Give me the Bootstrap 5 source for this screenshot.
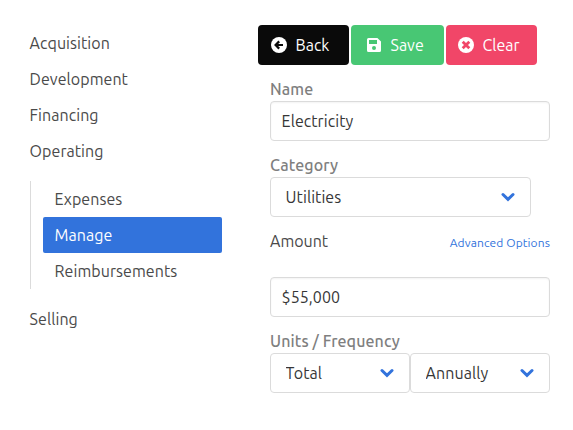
<!DOCTYPE html>
<html lang="en">
<head>
<meta charset="utf-8">
<meta name="viewport" content="width=device-width, initial-scale=1">
<title>Operating expenses</title>
<link href="https://cdn.jsdelivr.net/npm/bootstrap@5.3.0/dist/css/bootstrap.min.css" rel="stylesheet">
<style>
  body { font-family: Ubuntu, "Noto Sans", sans-serif; font-size: 16px; line-height: 24px; color: #4a4a4a; background: #fff; overflow: hidden; }
  .page { padding: 25px 23px 0 18px; }
  .side { width: 204px; }
  .side .nav-link { color: #4a4a4a; padding: 6px 12px 6px 11.6px; letter-spacing: .06px; border-radius: 2px; }
  .side .nav-link.active { background: #3273dc; color: #fff; }
  .subnav { border-left: 1px solid #dbdbdb; margin: 12px 0 12px 12px; padding-left: 12px; }
  .actions { gap: 2px; margin-left: -12px; width: max-content; }
  .actions .btn { height: 40px; padding: 0 0 0 13px; border: 0; border-radius: 4px; font-size: inherit; line-height: 24px; color: #fff; gap: 8.5px; }
  .actions .btn-clear { padding-left: 12px; }
  .actions .btn-save { padding-left: 15px; }
  .btn-back { width: 91px; background: #0a0a0a !important; }
  .btn-save { width: 93px; background: #48c774 !important; }
  .btn-clear { width: 91px; background: #f14668 !important; }
  .fields { width: 280px; }
  .field-label { color: #7f7f7f; font-weight: 500; letter-spacing: .1px; height: 24px; margin: 0; }
  .fields .form-control, .fields .form-select { height: 40px; border: 1px solid #dbdbdb; border-radius: 4px; color: #363636; font-size: inherit; line-height: 24px; padding: 7px 11px; letter-spacing: .06px; }
  .fields .form-control { box-shadow: inset 0 1px 2px rgba(10,10,10,.05); padding-left: 10.6px; }
  .fields .form-select { padding-left: 14.6px; background-image: none; }
  .picker { position: relative; }
  .picker svg { position: absolute; right: 16px; top: 15px; pointer-events: none; }
  .picker-category { width: 261px; }
  .advanced { color: #3273dc; font-size: 12px; letter-spacing: .1px; line-height: 18px; padding-top: 4px; text-decoration: none; }
  .gap-field { margin-top: 12px; }
</style>
<script src="https://cdn.jsdelivr.net/npm/bootstrap@5.3.0/dist/js/bootstrap.bundle.min.js"></script>
</head>
<body>
<div class="page d-flex justify-content-between">
  <nav class="side">
    <ul class="nav flex-column">
      <li><a class="nav-link" href="#">Acquisition</a></li>
      <li><a class="nav-link" href="#">Development</a></li>
      <li><a class="nav-link" href="#">Financing</a></li>
      <li><a class="nav-link" href="#">Operating</a>
        <ul class="subnav list-unstyled">
          <li><a class="nav-link" href="#">Expenses</a></li>
          <li><a class="nav-link active" href="#">Manage</a></li>
          <li><a class="nav-link" href="#">Reimbursements</a></li>
        </ul>
      </li>
      <li><a class="nav-link" href="#">Selling</a></li>
    </ul>
  </nav>
  <main class="fields">
    <div class="actions d-flex">
      <button class="btn btn-back d-flex align-items-center"><svg width="16" height="16" viewBox="0 0 16 16"><circle cx="8" cy="8" r="8" fill="#fff"/><path d="M12 8H5M8.200 4.400 4.600 8l3.600 3.600" fill="none" stroke="#0a0a0a" stroke-width="2.200"/></svg><span>Back</span></button>
      <button class="btn btn-save d-flex align-items-center"><svg width="16" height="16" viewBox="0 0 16 16"><path fill="#fff" fill-rule="evenodd" d="M2.500 1h8.900L15 4.600V13.500a1.500 1.500 0 0 1-1.500 1.500h-11A1.500 1.500 0 0 1 1 13.500v-11A1.500 1.500 0 0 1 2.500 1ZM3 3v4h8V3ZM8 9a2 2 0 1 0 0 4 2 2 0 0 0 0-4Z"/></svg><span>Save</span></button>
      <button class="btn btn-clear d-flex align-items-center"><svg width="16" height="16" viewBox="0 0 16 16"><circle cx="8" cy="8" r="8" fill="#fff"/><path d="m4.700 4.700 6.600 6.600m0-6.600-6.600 6.600" stroke="#f14668" stroke-width="2.800"/></svg><span>Clear</span></button>
    </div>
    <div class="gap-field">
      <label class="field-label d-block" for="name">Name</label>
      <input class="form-control" id="name" value="Electricity">
    </div>
    <div class="gap-field">
      <label class="field-label d-block" for="category">Category</label>
      <div class="picker picker-category"><select class="form-select" id="category"><option>Utilities</option></select>
        <svg width="14" height="10" viewBox="0 0 14 10"><path d="M2 2.500 7 7.300 12 2.500" fill="none" stroke="#3273dc" stroke-width="3" stroke-linecap="round"/></svg></div>
    </div>
    <div class="gap-field d-flex justify-content-between align-items-center mb-4">
      <label for="amount">Amount</label><a class="advanced" href="#">Advanced Options</a>
    </div>
    <input class="form-control" id="amount" value="$55,000">
    <div class="gap-field">
      <label class="field-label d-block" for="units">Units / Frequency</label>
      <div class="d-flex">
        <div class="picker w-50"><select class="form-select" id="units"><option>Total</option></select>
          <svg width="14" height="10" viewBox="0 0 14 10"><path d="M2 2.500 7 7.300 12 2.500" fill="none" stroke="#3273dc" stroke-width="3" stroke-linecap="round"/></svg></div>
        <div class="picker w-50"><select class="form-select" aria-label="Frequency"><option>Annually</option></select>
          <svg width="14" height="10" viewBox="0 0 14 10"><path d="M2 2.500 7 7.300 12 2.500" fill="none" stroke="#3273dc" stroke-width="3" stroke-linecap="round"/></svg></div>
      </div>
    </div>
  </main>
</div>
</body>
</html>
